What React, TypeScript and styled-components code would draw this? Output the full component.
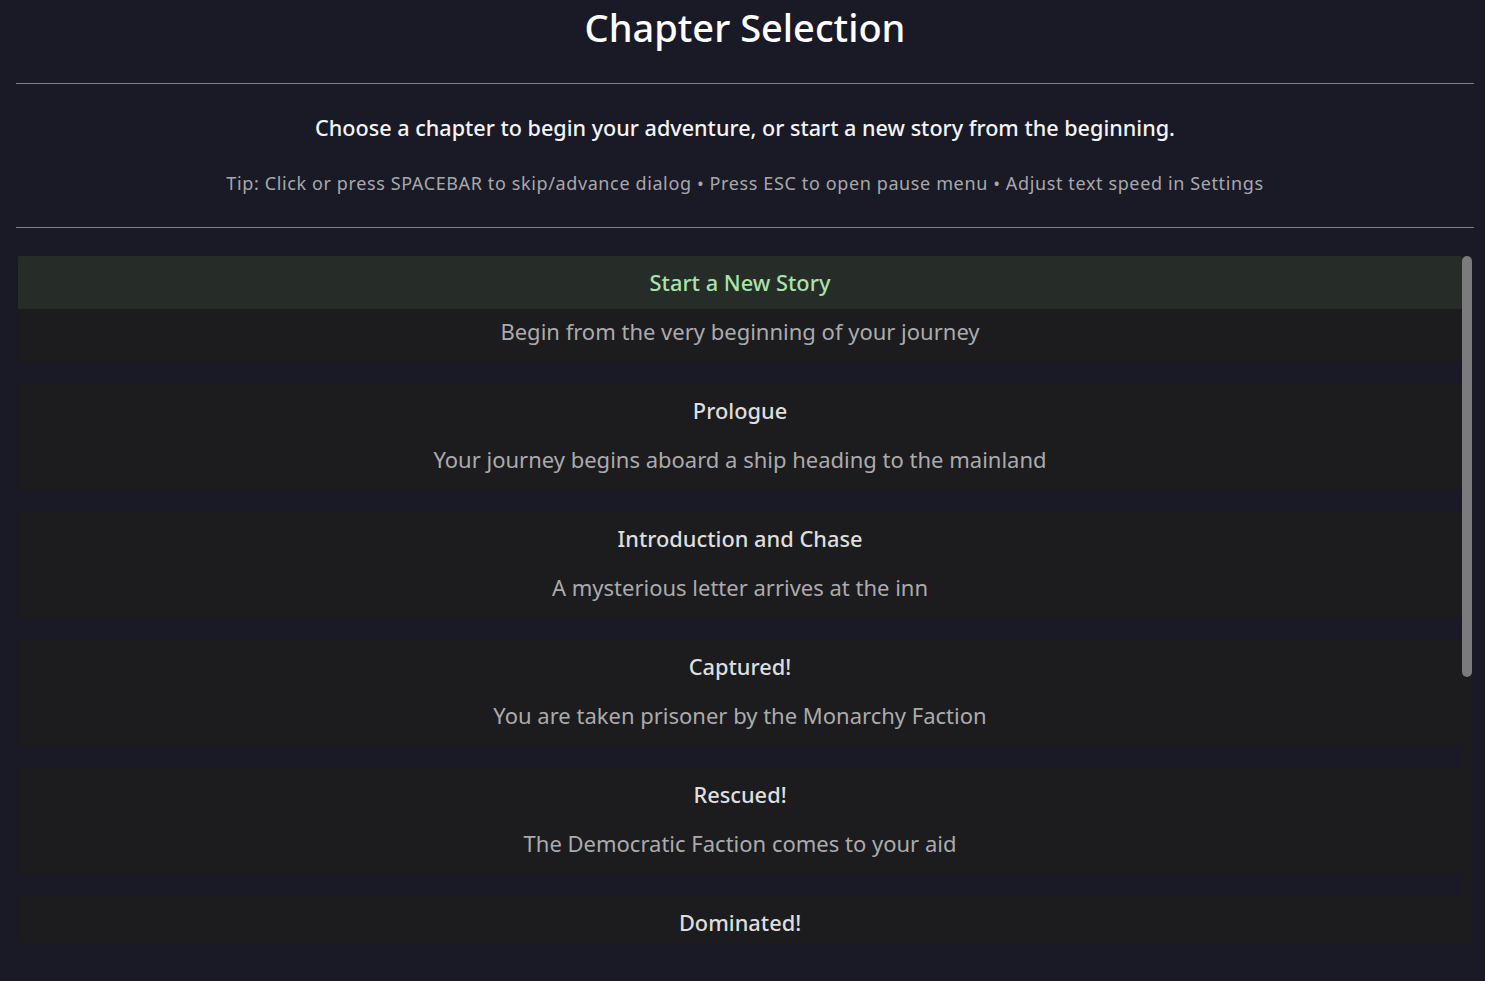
import styled, { createGlobalStyle } from 'styled-components'

const GlobalStyle = createGlobalStyle`
    html, body {
        margin:0;
        padding:0;
        background-color:#1a1a26;
        font-family:"Noto Sans", "Open Sans", sans-serif;
    }
`

const chapters = [
    { title: 'Start a New Story', desc: 'Begin from the very beginning of your journey', fresh: true },
    { title: 'Prologue', desc: 'Your journey begins aboard a ship heading to the mainland' },
    { title: 'Introduction and Chase', desc: 'A mysterious letter arrives at the inn' },
    { title: 'Captured!', desc: 'You are taken prisoner by the Monarchy Faction' },
    { title: 'Rescued!', desc: 'The Democratic Faction comes to your aid' },
    { title: 'Dominated!', desc: 'The Monarchy Faction tightens its grip on the realm' },
    { title: 'Uprising', desc: 'The people rise against their rulers' },
    { title: 'The Crossroads', desc: 'A choice that will decide the fate of the mainland' },
    { title: 'Epilogue', desc: 'The end of your journey, for now' },
]

const VIEW_HEIGHT = 687
const CONTENT_HEIGHT = chapters.length * 128 - 30

const Page = styled.div`
    height:981px;
    padding:0 11px 0 16px;
    display:flex;
    flex-direction:column;
    box-sizing:border-box;
`

const Title = styled.h1`
    margin:0;
    height:83px;
    display:flex;
    align-items:center;
    justify-content:center;
    padding-bottom:30px;
    box-sizing:border-box;
    color:#ffffff;
    font-size:38px;
    font-weight:500;
`

const Divider = styled.hr`
    margin:0;
    border:none;
    height:1px;
    background-color:#7d7d82;
`

const Intro = styled.div`
    height:143px;
    display:flex;
    flex-direction:column;
    align-items:center;
    justify-content:center;
    gap:29px;
    padding-bottom:4px;
    box-sizing:border-box;
`

const Lead = styled.p`
    margin:0;
    color:#f4f4f4;
    font-size:21.6px;
    font-weight:500;
`

const Tip = styled.p`
    margin:0;
    color:#a8a8ac;
    font-size:18px;
    letter-spacing:0.62px;
`

const Scroller = styled.div`
    margin:28px 2px 0 2px;
    height:${VIEW_HEIGHT}px;
    display:flex;
`

const List = styled.div`
    flex:1;
    overflow-y:auto;
    scrollbar-width:none;
    display:flex;
    flex-direction:column;
    gap:22px;
`

const Track = styled.div`
    width:10px;
    flex-shrink:0;
    background-color:#1c1c1f;
`

const Thumb = styled.div`
    width:100%;
    background-color:#7b7b7d;
    border-radius:5px;
`

const Card = styled.div`
    flex-shrink:0;
    display:flex;
    flex-direction:column;
    background-color:#1c1c1e;
    border-radius:2px;
`

const CardTitle = styled.div<{ $fresh?: boolean }>`
    height:53px;
    display:flex;
    align-items:center;
    justify-content:center;
    border-radius:2px 2px 0 0;
    background-color:${p => p.$fresh ? '#262c28' : 'transparent'};
    color:${p => p.$fresh ? '#a9e3a9' : '#dedede'};
    font-size:21.8px;
    font-weight:500;
`

const CardDesc = styled.div`
    height:53px;
    display:flex;
    align-items:center;
    justify-content:center;
    padding-bottom:10px;
    box-sizing:border-box;
    color:#ababad;
    font-size:22px;
`

export default function App() {

    const thumbHeight = Math.round(VIEW_HEIGHT * VIEW_HEIGHT / CONTENT_HEIGHT)

    return <>
        <GlobalStyle />
        <Page>
            <Title>Chapter Selection</Title>
            <Divider />
            <Intro>
                <Lead>Choose a chapter to begin your adventure, or start a new story from the beginning.</Lead>
                <Tip>Tip: Click or press SPACEBAR to skip/advance dialog • Press ESC to open pause menu • Adjust text speed in Settings</Tip>
            </Intro>
            <Divider />
            <Scroller>
                <List>
                    {chapters.map((c) => <Card key={c.title}>
                        <CardTitle $fresh={c.fresh}>{c.title}</CardTitle>
                        <CardDesc>{c.desc}</CardDesc>
                    </Card>)}
                </List>
                <Track>
                    <Thumb style={{ height: thumbHeight }} />
                </Track>
            </Scroller>
        </Page>
    </>
}
